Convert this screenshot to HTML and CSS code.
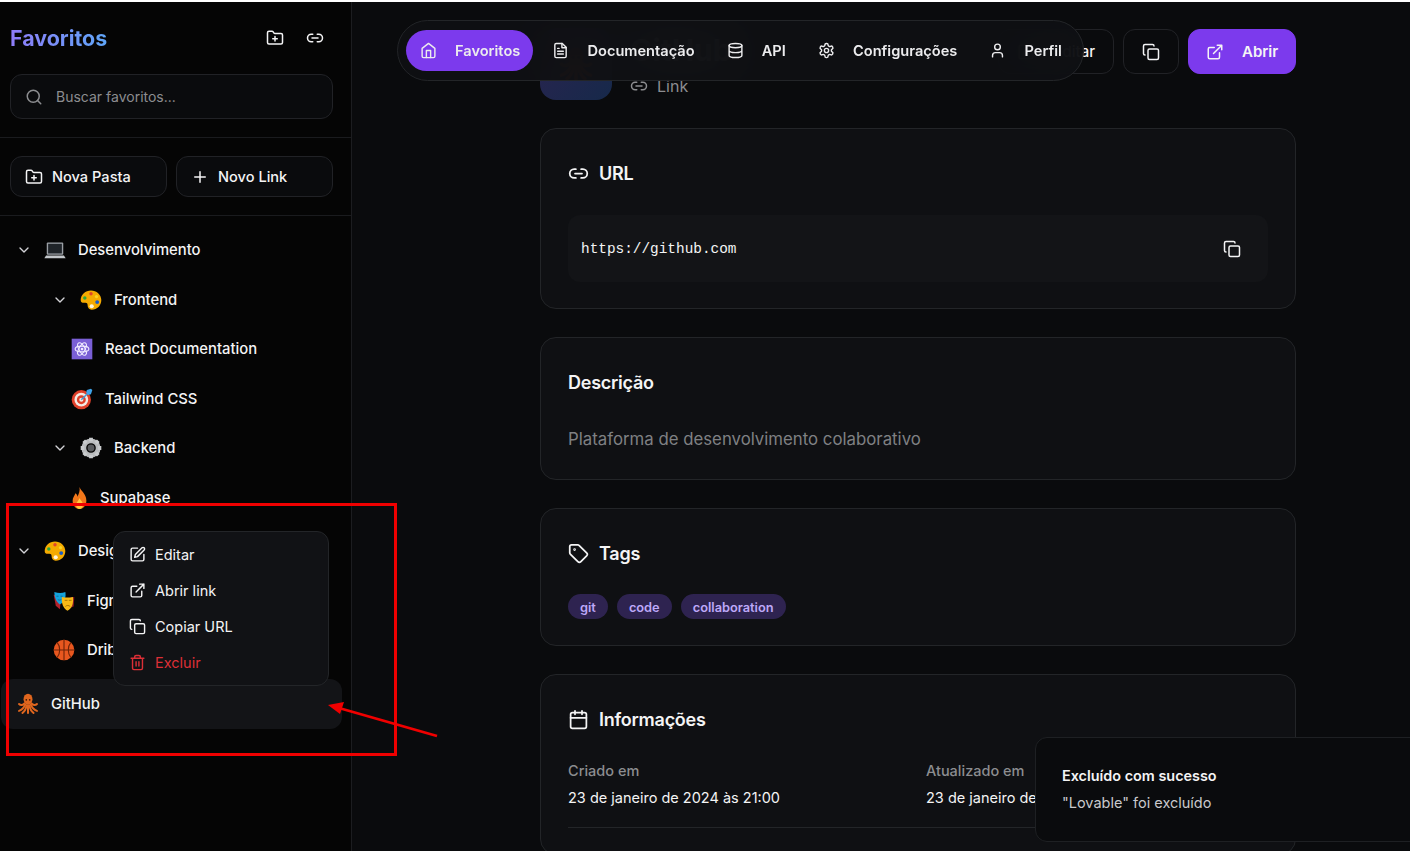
FILE: index.html
```html
<!DOCTYPE html>
<html lang="pt-BR">
<head>
<meta charset="utf-8">
<title>Favoritos</title>
<link rel="stylesheet" href="styles.css">
</head>
<body>
<svg class="sprite" aria-hidden="true">
  <defs>
    <symbol id="i-folder-plus" viewBox="0 0 24 24"><path d="M12 10v6M9 13h6M20 20a2 2 0 0 0 2-2V8a2 2 0 0 0-2-2h-7.9a2 2 0 0 1-1.69-.9L9.6 3.9A2 2 0 0 0 7.93 3H4a2 2 0 0 0-2 2v13a2 2 0 0 0 2 2Z"/></symbol>
    <symbol id="i-link" viewBox="0 0 24 24"><path d="M9 17H7A5 5 0 0 1 7 7h2M15 7h2a5 5 0 1 1 0 10h-2M8 12h8"/></symbol>
    <symbol id="i-search" viewBox="0 0 24 24"><circle cx="11" cy="11" r="8"/><path d="m21 21-4.3-4.3"/></symbol>
    <symbol id="i-plus" viewBox="0 0 24 24"><path d="M5 12h14M12 5v14"/></symbol>
    <symbol id="i-chevron" viewBox="0 0 24 24"><path d="m6 9 6 6 6-6"/></symbol>
    <symbol id="i-home" viewBox="0 0 24 24"><path d="m3 9 9-7 9 7v11a2 2 0 0 1-2 2H5a2 2 0 0 1-2-2z"/><path d="M9 22V12h6v10"/></symbol>
    <symbol id="i-file" viewBox="0 0 24 24"><path d="M14.5 2H6a2 2 0 0 0-2 2v16a2 2 0 0 0 2 2h12a2 2 0 0 0 2-2V7.5L14.5 2z"/><path d="M14 2v6h6M16 13H8M16 17H8M10 9H8"/></symbol>
    <symbol id="i-db" viewBox="0 0 24 24"><ellipse cx="12" cy="5" rx="9" ry="3"/><path d="M3 5V19A9 3 0 0 0 21 19V5M3 12A9 3 0 0 0 21 12"/></symbol>
    <symbol id="i-gear" viewBox="0 0 24 24"><path d="M12.22 2h-.44a2 2 0 0 0-2 2v.18a2 2 0 0 1-1 1.73l-.43.25a2 2 0 0 1-2 0l-.15-.08a2 2 0 0 0-2.73.73l-.22.38a2 2 0 0 0 .73 2.73l.15.1a2 2 0 0 1 1 1.72v.51a2 2 0 0 1-1 1.74l-.15.09a2 2 0 0 0-.73 2.73l.22.38a2 2 0 0 0 2.73.73l.15-.08a2 2 0 0 1 2 0l.43.25a2 2 0 0 1 1 1.73V20a2 2 0 0 0 2 2h.44a2 2 0 0 0 2-2v-.18a2 2 0 0 1 1-1.73l.43-.25a2 2 0 0 1 2 0l.15.08a2 2 0 0 0 2.73-.73l.22-.39a2 2 0 0 0-.73-2.73l-.15-.08a2 2 0 0 1-1-1.74v-.5a2 2 0 0 1 1-1.74l.15-.09a2 2 0 0 0 .73-2.73l-.22-.38a2 2 0 0 0-2.73-.73l-.15.08a2 2 0 0 1-2 0l-.43-.25a2 2 0 0 1-1-1.73V4a2 2 0 0 0-2-2z"/><circle cx="12" cy="12" r="3"/></symbol>
    <symbol id="i-user" viewBox="0 0 24 24"><path d="M19 21v-2a4 4 0 0 0-4-4H9a4 4 0 0 0-4 4v2"/><circle cx="12" cy="7" r="4"/></symbol>
    <symbol id="i-copy" viewBox="0 0 24 24"><rect x="8" y="8" width="14" height="14" rx="2"/><path d="M4 16c-1.1 0-2-.9-2-2V4c0-1.1.9-2 2-2h10c1.1 0 2 .9 2 2"/></symbol>
    <symbol id="i-ext" viewBox="0 0 24 24"><path d="M18 13v6a2 2 0 0 1-2 2H5a2 2 0 0 1-2-2V8a2 2 0 0 1 2-2h6M15 3h6v6M10 14 21 3"/></symbol>
    <symbol id="i-tag" viewBox="0 0 24 24"><path d="M12.586 2.586A2 2 0 0 0 11.172 2H4a2 2 0 0 0-2 2v7.172a2 2 0 0 0 .586 1.414l8.704 8.704a2.426 2.426 0 0 0 3.42 0l6.58-6.58a2.426 2.426 0 0 0 0-3.42z"/><circle cx="7.5" cy="7.5" r=".5"/></symbol>
    <symbol id="i-cal" viewBox="0 0 24 24"><rect x="3" y="4" width="18" height="18" rx="2"/><path d="M16 2v4M8 2v4M3 10h18"/></symbol>
    <symbol id="i-pen" viewBox="0 0 24 24"><path d="M12 3H5a2 2 0 0 0-2 2v14a2 2 0 0 0 2 2h14a2 2 0 0 0 2-2v-7"/><path d="M18.375 2.625a2.121 2.121 0 1 1 3 3L12 15l-4 1 1-4Z"/></symbol>
    <symbol id="i-trash" viewBox="0 0 24 24"><path d="M3 6h18M19 6v14c0 1-1 2-2 2H7c-1 0-2-1-2-2V6M8 6V4c0-1 1-2 2-2h4c1 0 2 1 2 2v2M10 11v6M14 11v6"/></symbol>

    <symbol id="e-laptop" viewBox="0 0 32 32"><rect x="4" y="5" width="24" height="18" rx="1.5" fill="#9a9fa5"/><rect x="6" y="7" width="20" height="14" fill="#1f2429"/><path d="M3 24h26l2.5 4H.5z" fill="#c3c7cb"/></symbol>
    <symbol id="e-palette" viewBox="0 0 32 32"><path d="M16 2C8 2 1 8 1 16c0 5 4 4 7 4 2 0 3 1 3 3 0 4 2 7 6 7 8 0 14-6 14-14S24 2 16 2z" fill="#f5ab00"/><circle cx="7" cy="13" r="2.5" fill="#2aa63c"/><circle cx="16" cy="7" r="2.5" fill="#e0452c"/><circle cx="24" cy="11" r="2.4" fill="#f9d423"/><circle cx="25" cy="19" r="2.8" fill="#1a5cc8"/><circle cx="17" cy="25" r="3" fill="#fff5dc"/></symbol>
    <symbol id="e-atom" viewBox="0 0 32 32"><rect x="1" y="1" width="30" height="30" fill="#7a5fd6"/><g fill="none" stroke="#efeaff" stroke-width="1.6"><ellipse cx="16" cy="16" rx="10" ry="4.2"/><ellipse cx="16" cy="16" rx="10" ry="4.2" transform="rotate(60 16 16)"/><ellipse cx="16" cy="16" rx="10" ry="4.2" transform="rotate(120 16 16)"/></g><circle cx="16" cy="16" r="2" fill="#efeaff"/></symbol>
    <symbol id="e-target" viewBox="0 0 32 32"><circle cx="15" cy="17" r="14" fill="#e0402a"/><circle cx="15" cy="17" r="10" fill="#f4e9e4"/><circle cx="15" cy="17" r="6.5" fill="#e0402a"/><circle cx="15" cy="17" r="3" fill="#f4e9e4"/><path d="M15 17 27 5" stroke="#3f9bd8" stroke-width="2"/><path d="M23 3l6-2 2 2-2 6-4 1-3-3z" fill="#3fa3e8"/></symbol>
    <symbol id="e-gear" viewBox="0 0 32 32"><circle cx="16" cy="16" r="10.5" fill="none" stroke="#b9bbbd" stroke-width="7"/><path d="M16 1v5M16 26v5M1 16h5M26 16h5M5.4 5.4l3.6 3.6M23 23l3.6 3.6M5.4 26.6 9 23M23 9l3.6-3.6" stroke="#c9cbcd" stroke-width="5.5"/><circle cx="16" cy="16" r="5" fill="#5a5c5f"/></symbol>
    <symbol id="e-fire" viewBox="5 0 22 32"><path d="M16 0c2 6 10 10 10 20 0 7-5 12-10 12S6 27 6 20c0-5 3-7 4-11 2 1 3 3 3 5 2-4 4-8 3-14z" fill="#f2771a"/><path d="M16 16c1 3 5 5 5 10 0 3-2 6-5 6s-5-3-5-6c0-4 4-6 5-10z" fill="#ffc83d"/></symbol>
    <symbol id="e-masks" viewBox="0 0 32 32"><path d="M1 7l3 16 6 5 2-20z" fill="#b1212b"/><path d="M25 11l6-1-1 14-5 2z" fill="#8d1a24"/><path d="M2 3c6 2 11 2 16 0 1 7 0 14-8 18C5 18 2 11 2 3z" fill="#14a3dc"/><path d="M13 10c5 1 11 1 16 0 1 9-1 17-8 20-6-3-9-11-8-20z" fill="#f7b916"/><path d="M17 15h4M23 15h4M18 24c2-2 5-2 7 0" stroke="#a87400" stroke-width="1.4" fill="none"/><path d="M5 9h3M11 9h3M7 14c2 1 3 1 5 0" stroke="#0b6d96" stroke-width="1.4" fill="none"/></symbol>
    <symbol id="e-ball" viewBox="0 0 32 32"><circle cx="16" cy="16" r="15" fill="#e8571f"/><g fill="none" stroke="#6e2408" stroke-width="1.6"><path d="M1 16h30M16 1v30M6 5c5 6 5 16 0 22M26 5c-5 6-5 16 0 22"/></g></symbol>
    <symbol id="e-octopus" viewBox="0 0 32 32"><ellipse cx="16" cy="9" rx="6.5" ry="8" fill="#e0661e"/><g fill="none" stroke="#e0661e" stroke-width="3" stroke-linecap="round"><path d="M11 15c-2 3-6 3-8 1"/><path d="M12 17c-2 5-6 8-9 9"/><path d="M14 18c-1 5-3 9-6 11"/><path d="M16 18v11"/><path d="M18 18c1 5 3 9 6 11"/><path d="M20 17c2 5 6 8 9 9"/><path d="M21 15c2 3 6 3 8 1"/></g><circle cx="13.5" cy="10" r="1.2" fill="#3a1500"/><circle cx="18.5" cy="10" r="1.2" fill="#3a1500"/></symbol>
  </defs>
</svg>

<div class="app">
  <aside class="sidebar">
    <div class="side-head">
      <div class="title-row">
        <h1 class="brand">Favoritos</h1>
        <div class="title-actions">
          <svg class="icon i18"><use href="#i-folder-plus"/></svg>
          <svg class="icon i18"><use href="#i-link"/></svg>
        </div>
      </div>
      <div class="search">
        <svg class="icon i18 muted"><use href="#i-search"/></svg>
        <span class="search-text">Buscar favoritos...</span>
      </div>
    </div>
    <div class="side-actions">
      <div class="side-btn"><svg class="icon i18"><use href="#i-folder-plus"/></svg>Nova Pasta</div>
      <div class="side-btn"><svg class="icon i18"><use href="#i-plus"/></svg>Novo Link</div>
    </div>
    <nav class="tree">
      <div class="group">
        <div class="row lvl1"><svg class="icon i16 chev"><use href="#i-chevron"/></svg><svg class="emoji"><use href="#e-laptop"/></svg><span>Desenvolvimento</span></div>
        <div class="row lvl2"><svg class="icon i16 chev"><use href="#i-chevron"/></svg><svg class="emoji"><use href="#e-palette"/></svg><span>Frontend</span></div>
        <div class="row lvl3"><svg class="emoji"><use href="#e-atom"/></svg><span>React Documentation</span></div>
        <div class="row lvl3"><svg class="emoji"><use href="#e-target"/></svg><span>Tailwind CSS</span></div>
        <div class="row lvl2"><svg class="icon i16 chev"><use href="#i-chevron"/></svg><svg class="emoji"><use href="#e-gear"/></svg><span>Backend</span></div>
        <div class="row lvl3b"><svg class="emoji emoji-narrow"><use href="#e-fire"/></svg><span>Supabase</span></div>
      </div>
      <div class="group">
        <div class="row lvl1"><svg class="icon i16 chev"><use href="#i-chevron"/></svg><svg class="emoji"><use href="#e-palette"/></svg><span>Design</span></div>
        <div class="row lvl2b"><svg class="emoji"><use href="#e-masks"/></svg><span>Figma</span></div>
        <div class="row lvl2b"><svg class="emoji"><use href="#e-ball"/></svg><span>Dribbble</span></div>
      </div>
      <div class="row lvl0 row-hover"><svg class="emoji"><use href="#e-octopus"/></svg><span>GitHub</span></div>
    </nav>
  </aside>

  <main class="main">
    <div class="content">
      <header class="page-head">
        <div class="identity">
          <div class="thumb"><svg class="emoji thumb-emoji"><use href="#e-octopus"/></svg></div>
          <div class="identity-text">
            <h2 class="page-title">GitHub</h2>
            <div class="kind"><svg class="icon i18"><use href="#i-link"/></svg>Link</div>
          </div>
        </div>
        <div class="page-actions">
          <div class="act"><svg class="icon i18"><use href="#i-pen"/></svg>Editar</div>
          <div class="act act-square"><svg class="icon i18"><use href="#i-copy"/></svg></div>
          <div class="act act-primary"><svg class="icon i18"><use href="#i-ext"/></svg>Abrir</div>
        </div>
      </header>

      <section class="card">
        <h3 class="card-title"><svg class="icon i21"><use href="#i-link"/></svg>URL</h3>
        <div class="code-box"><code class="code">https://github.com</code><svg class="icon i18"><use href="#i-copy"/></svg></div>
      </section>

      <section class="card">
        <h3 class="card-title">Descrição</h3>
        <p class="desc">Plataforma de desenvolvimento colaborativo</p>
      </section>

      <section class="card card-tags">
        <h3 class="card-title"><svg class="icon i21"><use href="#i-tag"/></svg>Tags</h3>
        <div class="chips"><span class="chip">git</span><span class="chip">code</span><span class="chip">collaboration</span></div>
      </section>

      <section class="card">
        <h3 class="card-title"><svg class="icon i21"><use href="#i-cal"/></svg>Informações</h3>
        <div class="info-grid">
          <div><div class="info-label">Criado em</div><div class="info-value">23 de janeiro de 2024 às 21:00</div></div>
          <div><div class="info-label">Atualizado em</div><div class="info-value">23 de janeiro de 2024 às 21:00</div></div>
        </div>
      </section>
    </div>
  </main>
</div>

<div class="topnav">
  <div class="nav-item nav-active"><svg class="icon i17"><use href="#i-home"/></svg>Favoritos</div>
  <div class="nav-item"><svg class="icon i17"><use href="#i-file"/></svg>Documentação</div>
  <div class="nav-item"><svg class="icon i17"><use href="#i-db"/></svg>API</div>
  <div class="nav-item"><svg class="icon i17"><use href="#i-gear"/></svg>Configurações</div>
  <div class="nav-item"><svg class="icon i17"><use href="#i-user"/></svg>Perfil</div>
</div>

<div class="menu">
  <div class="menu-item"><svg class="icon i17"><use href="#i-pen"/></svg>Editar</div>
  <div class="menu-item"><svg class="icon i17"><use href="#i-ext"/></svg>Abrir link</div>
  <div class="menu-item"><svg class="icon i17"><use href="#i-copy"/></svg>Copiar URL</div>
  <div class="menu-item menu-danger"><svg class="icon i17"><use href="#i-trash"/></svg>Excluir</div>
</div>

<div class="toast">
  <div class="toast-title">Excluído com sucesso</div>
  <div class="toast-text">"Lovable" foi excluído</div>
</div>

<div class="mark-box"></div>
<svg class="mark-arrow" viewBox="0 0 120 50"><path d="M110 36 12 8" stroke="#f00000" stroke-width="2.8"/><path d="M1 5 17 2 13 14z" fill="#f00000"/></svg>
</body>
</html>
```

FILE: styles.css
```css
* { box-sizing: border-box; }
html, body { margin: 0; height: 100%; overflow: hidden; }
body {
  background: #0a0b0d;
  border-top: 2px solid #fff;
  color: #f4f4f5;
  font-family: Inter, "Noto Sans", sans-serif;
  font-size: 15px;
  position: relative;
}
.sprite { position: absolute; width: 0; height: 0; }
.icon { fill: none; stroke: currentColor; stroke-width: 2; stroke-linecap: round; stroke-linejoin: round; flex: none; }
.i16 { width: 16px; height: 16px; }
.i17 { width: 17px; height: 17px; }
.i18 { width: 18px; height: 18px; }
.i21 { width: 21px; height: 21px; }
.muted { color: #8c8d90; }
.emoji { width: 22px; height: 22px; flex: none; }
.emoji-narrow { width: 17px; }

.app { display: flex; height: 849px; }

.sidebar { width: 352px; flex: none; background: #050505; border-right: 1px solid #1c1d20; display: flex; flex-direction: column; }
.side-head { padding: 18px 18px 18px 10px; border-bottom: 1px solid #1a1b1e; }
.title-row { display: flex; align-items: center; justify-content: space-between; height: 36px; margin-bottom: 18px; padding-right: 9px; }
.brand { margin: 0; font-size: 21.4px; font-weight: 700; background: linear-gradient(90deg, #8f7cf8, #5fa5f8); -webkit-background-clip: text; background-clip: text; color: transparent; }
.title-actions { display: flex; gap: 22px; color: #f4f4f5; }
.search { height: 45px; border: 1px solid #212226; border-radius: 12px; background: #0a0b0d; display: flex; align-items: center; gap: 13px; padding-left: 14px; }
.search-text { color: #8c8d90; font-size: 14px; }
.side-actions { display: flex; gap: 9px; padding: 18px 18px 18px 10px; border-bottom: 1px solid #1a1b1e; }
.side-btn { flex: 1; height: 41px; border: 1px solid #212226; border-radius: 12px; background: #0a0b0d; display: flex; align-items: center; gap: 9px; padding-left: 14px; font-weight: 500; font-size: 14.6px; }

.tree { padding: 9.5px 9px 0 1px; display: flex; flex-direction: column; gap: 4px; }
.group { display: flex; flex-direction: column; }
.row { height: 49.5px; display: flex; align-items: center; font-weight: 500; font-size: 14.8px; border-radius: 12px; white-space: nowrap; }
.chev { color: #d4d4d8; margin-right: 12px; }
.row .emoji { margin-right: 12px; }
.lvl0 { padding-left: 16px; }
.lvl1 { padding-left: 15px; }
.lvl2 { padding-left: 51px; }
.lvl2b { padding-left: 52px; }
.lvl3 { padding-left: 70px; }
.lvl3b { padding-left: 70px; }
.row-hover { background: #131417; }

.main { flex: 1; overflow: hidden; }
.content { width: 756px; margin-left: 188px; padding-top: 26px; }
.page-head { display: flex; justify-content: space-between; align-items: flex-start; margin-bottom: 28px; }
.identity { display: flex; gap: 18px; }
.thumb { width: 72px; height: 72px; border-radius: 16px; background: linear-gradient(135deg, #2c2350, #16294a); display: flex; align-items: center; justify-content: center; }
.thumb-emoji { width: 36px; height: 36px; }
.page-title { margin: 4px 0 0; font-size: 30px; font-weight: 700; line-height: 36px; }
.kind { display: flex; align-items: center; gap: 9px; color: #8c8d90; margin-top: 4px; height: 28px; font-size: 16px; }
.page-actions { display: flex; gap: 9px; margin-top: 1px; }
.act { height: 45px; border: 1px solid #212226; border-radius: 12px; display: flex; align-items: center; gap: 18px; padding: 0 18px; font-weight: 500; font-size: 15px; }
.act-square { width: 56px; padding: 0; justify-content: center; }
.act-primary { background: #7c3aed; border-color: #7c3aed; width: 108px; padding: 0 17px; font-weight: 600; }

.card { background: #0f1013; border: 1px solid #232528; border-radius: 16px; padding: 27px 27px 26px; margin-bottom: 28px; }
.card-title { margin: 0; height: 34px; display: flex; align-items: center; gap: 10px; font-size: 18px; font-weight: 600; letter-spacing: -.25px; }
.code-box { height: 67px; margin-top: 25px; background: #131417; border-radius: 12px; display: flex; align-items: center; justify-content: space-between; padding: 0 27px 0 13px; }
.code { font-family: "Liberation Mono", monospace; font-size: 14.4px; }
.desc { margin: 26px 0 0; line-height: 28px; font-size: 16.8px; color: #7f8083; }
.chips { display: flex; gap: 9px; margin-top: 24px; }
.chip { height: 25px; padding: 1px 12px 0; border-radius: 13px; background: #2e2350; color: #bda8f8; font-size: 12.8px; font-weight: 600; display: flex; align-items: center; }
.info-grid { display: grid; grid-template-columns: 1fr 1fr; gap: 16px; margin-top: 25px; padding-bottom: 19px; border-bottom: 1px solid #232528; }
.info-label { height: 20px; line-height: 20px; color: #8c8d90; font-weight: 500; font-size: 14.5px; }
.info-value { height: 20px; line-height: 20px; margin-top: 7px; font-size: 14.5px; }

.topnav { position: absolute; left: 397px; top: 18px; height: 61px; display: flex; align-items: center; gap: 6.2px; padding: 0 8px; border: 1px solid #232528; border-radius: 31px; background: rgba(15, 16, 19, .95); backdrop-filter: blur(24px); }
.nav-item { height: 41px; display: flex; align-items: center; gap: 18px; padding: 0 13px; border-radius: 21px; font-weight: 600; font-size: 14.6px; color: #ececee; white-space: nowrap; }
.nav-active { background: #7c3aed; padding-left: 14px; }

.menu { position: absolute; left: 113px; top: 529px; width: 216px; height: 155px; padding: 4px 0; border: 1px solid #232528; border-radius: 12px; background: #111215; }
.menu-item { height: 36px; display: flex; align-items: center; gap: 9px; padding-left: 15px; font-size: 14.5px; }
.menu-danger { color: #dc2f36; }

.toast { position: absolute; left: 1035px; top: 735px; width: 400px; height: 105px; padding: 28px 26px; border: 1px solid #1e2023; border-radius: 12px; background: #0a0b0d; }
.toast-title { font-weight: 600; font-size: 14.4px; line-height: 20px; }
.toast-text { font-size: 14.5px; line-height: 20px; margin-top: 7px; color: #c9c9cc; }

.mark-box { position: absolute; left: 6px; top: 501px; width: 391px; height: 253px; border: 3px solid #f00000; }
.mark-arrow { position: absolute; left: 327px; top: 698px; width: 120px; height: 50px; }
```
